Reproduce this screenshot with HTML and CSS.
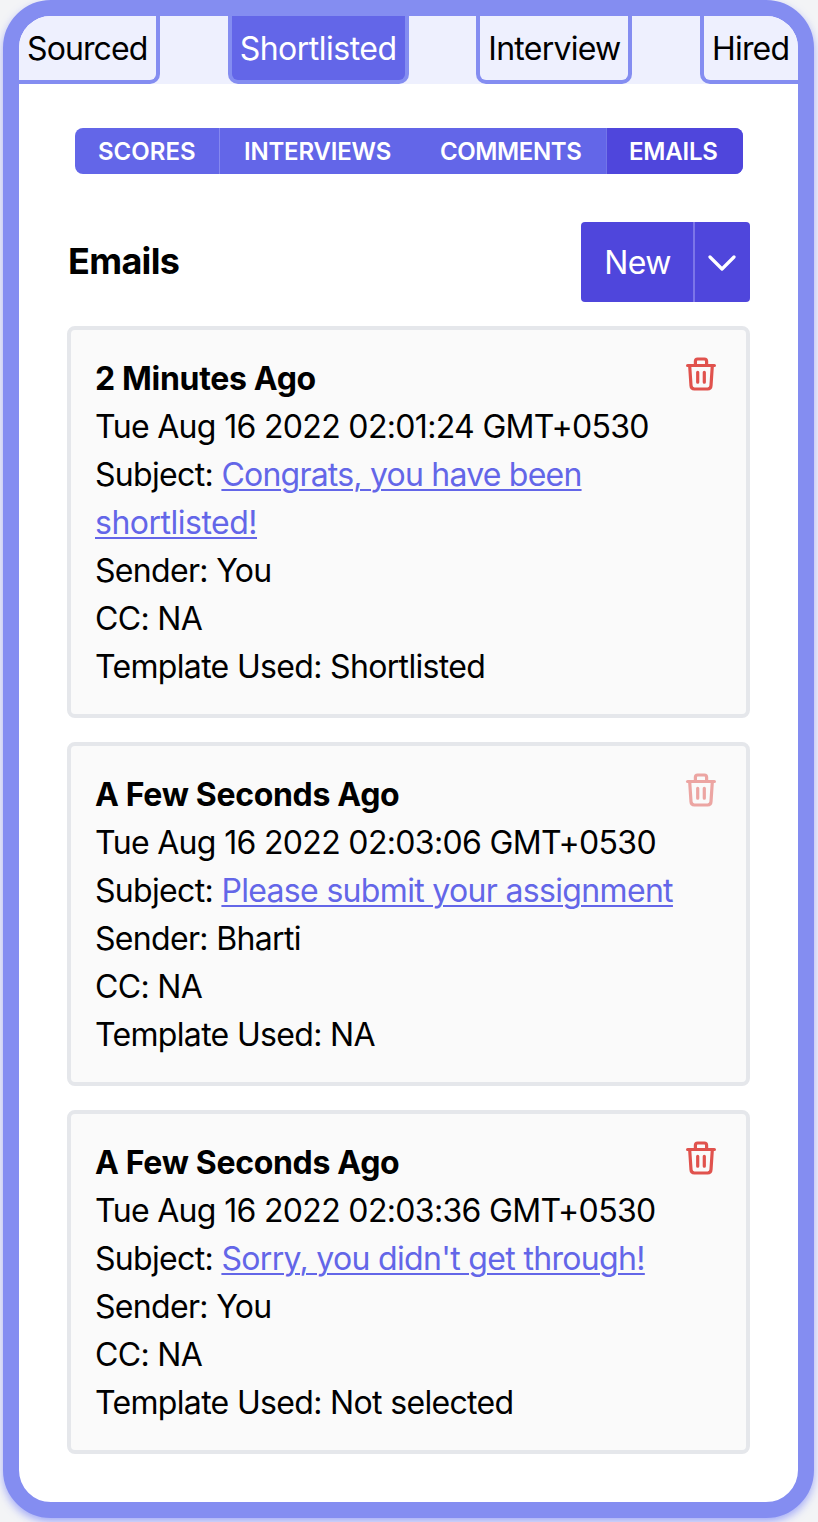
FILE: index.html
```html
<!DOCTYPE html>
<html lang="en">
<head>
<meta charset="utf-8">
<title>Candidate emails</title>
<link rel="stylesheet" href="styles.css">
</head>
<body>
<svg class="symbols" aria-hidden="true">
  <symbol id="trash" viewBox="0 0 32 36">
    <g fill="none" stroke="currentColor" stroke-width="3.2" stroke-linecap="round" stroke-linejoin="round">
      <path d="M2.6 9.5H29.4"/>
      <path d="M10.4 9V5.2Q10.4 3 12.6 3H19.4Q21.6 3 21.6 5.2V9"/>
      <path d="M4.7 10L6 29.7Q6.2 33 9.4 33H22.6Q25.8 33 26 29.7L27.3 10"/>
      <path d="M12.7 16.3V26.2M19.3 16.3V26.2"/>
    </g>
  </symbol>
</svg>
<main class="panel">
  <nav class="stages">
    <span class="stage sourced">Sourced</span>
    <span class="stage shortlisted">Shortlisted</span>
    <span class="stage interview">Interview</span>
    <span class="stage hired">Hired</span>
  </nav>
  <nav class="sections">
    <span class="section scores">SCORES</span>
    <span class="section interviews">INTERVIEWS</span>
    <span class="section comments">COMMENTS</span>
    <span class="section emails">EMAILS</span>
  </nav>
  <header class="heading">
    <h1 class="title">Emails</h1>
    <div class="new">
      <button class="new-label">New</button>
      <button class="new-menu" aria-label="More"><svg width="28" height="17" viewBox="0 0 28 17" fill="none" stroke="currentColor" stroke-width="3.2" stroke-linecap="round" stroke-linejoin="round"><path d="M2 3L14 15L26 3"/></svg></button>
    </div>
  </header>
  <section class="list">
    <article class="card">
      <div class="details">
        <h2 class="when">2 Minutes Ago</h2>
        <p class="line date">Tue Aug 16 2022 02:01:24 GMT+0530</p>
        <p class="line">Subject: <a class="subject congrats">Congrats, you have been<br><span class="wrapped">shortlisted!</span></a></p>
        <p class="line">Sender: You</p>
        <p class="line">CC: NA</p>
        <p class="line">Template Used: Shortlisted</p>
      </div>
      <svg class="trash"><use href="#trash"/></svg>
    </article>
    <article class="card">
      <div class="details">
        <h2 class="when">A Few Seconds Ago</h2>
        <p class="line date">Tue Aug 16 2022 02:03:06 GMT+0530</p>
        <p class="line">Subject: <a class="subject">Please submit your assignment</a></p>
        <p class="line">Sender: Bharti</p>
        <p class="line">CC: NA</p>
        <p class="line">Template Used: NA</p>
      </div>
      <svg class="trash muted"><use href="#trash"/></svg>
    </article>
    <article class="card">
      <div class="details">
        <h2 class="when">A Few Seconds Ago</h2>
        <p class="line date">Tue Aug 16 2022 02:03:36 GMT+0530</p>
        <p class="line">Subject: <a class="subject">Sorry, you didn't get through!</a></p>
        <p class="line">Sender: You</p>
        <p class="line">CC: NA</p>
        <p class="line">Template Used: Not selected</p>
      </div>
      <svg class="trash"><use href="#trash"/></svg>
    </article>
  </section>
</main>
</body>
</html>
```
FILE: styles.css
```css
* { box-sizing: border-box; }
html { overflow: hidden; background: #f3f4f6; }
body {
  margin: 0;
  height: 1522px;
  overflow: hidden;
  font-family: Inter, "Liberation Sans", sans-serif;
  font-size: 32px;
  font-weight: 430;
  line-height: 48px;
  letter-spacing: -0.67px;
  color: #000;
}
h1, h2, p { margin: 0; }
.symbols { display: none; }
.panel {
  width: 811px;
  height: 1518px;
  margin-left: 3px;
  border: 16px solid #848df1;
  border-radius: 48px;
  background: #fff;
  overflow: hidden;
  box-shadow: 0 4px 8px rgba(129, 140, 248, .7);
}
.stages {
  display: flex;
  justify-content: space-between;
  height: 68px;
  background: #eef0fe;
}
.stage {
  flex: none;
  height: 68px;
  padding: 9px 0 0 8px;
  border: 4px solid #848df1;
  border-top: 0;
  border-radius: 0 0 10px 10px;
  white-space: nowrap;
}
.sourced { width: 141px; border-left: 0; border-bottom-left-radius: 0; letter-spacing: -0.9px; }
.shortlisted { width: 181px; background: #6366e8; color: #fff; letter-spacing: -0.5px; }
.interview { width: 156px; letter-spacing: -0.75px; }
.hired { width: 98px; border-right: 0; border-bottom-right-radius: 0; letter-spacing: -0.8px; }
.sections {
  display: flex;
  width: 668px;
  height: 46px;
  margin: 44px 0 0 56px;
  border-radius: 8px;
  overflow: hidden;
  background: #6366e8;
  color: #fff;
  font-size: 24px;
  font-weight: 600;
  line-height: 47px;
  letter-spacing: -0.2px;
}
.section { flex: none; padding-left: 24px; white-space: nowrap; }
.scores { width: 145px; padding-left: 23px; border-right: 1px solid #8588f0; letter-spacing: 0; }
.interviews { width: 196px; }
.comments { width: 191px; border-right: 1px solid #7275e8; letter-spacing: -0.4px; }
.emails { width: 136px; padding-left: 22px; background: #4f46dc; }
.heading {
  display: flex;
  justify-content: space-between;
  align-items: center;
  height: 80px;
  margin: 48px 48px 0;
}
.title { padding: 0 0 2px 1px; font-size: 36px; font-weight: 700; }
.new {
  display: flex;
  width: 169px;
  height: 80px;
  border-radius: 4px;
  overflow: hidden;
  background: #4f46dc;
}
.new button {
  border: 0;
  padding: 0;
  background: none;
  color: #fff;
  font: inherit;
  letter-spacing: inherit;
}
.new .new-label { width: 114px; padding: 2px 0 0 1px; border-right: 2px solid #7c75e8; }
.new .new-menu { display: flex; align-items: center; justify-content: center; width: 54px; }
.list { display: flex; flex-direction: column; gap: 24px; margin: 24px 48px 0; }
.card {
  display: flex;
  justify-content: space-between;
  padding: 25px 29px 23px 24px;
  border: 4px solid #e5e7eb;
  border-radius: 8px;
  background: #fafafa;
}
.details { white-space: nowrap; }
.when { font-size: 32px; line-height: 48px; font-weight: 700; letter-spacing: -0.32px; }
.subject { color: #6366e8; text-decoration: underline; text-decoration-thickness: 2px; text-underline-offset: 3px; }
.congrats { letter-spacing: -0.78px; }
.wrapped { letter-spacing: -0.5px; }
.trash { flex: none; width: 32px; height: 36px; margin-top: 1px; color: #e0524d; }
.muted { opacity: .5; }
```
